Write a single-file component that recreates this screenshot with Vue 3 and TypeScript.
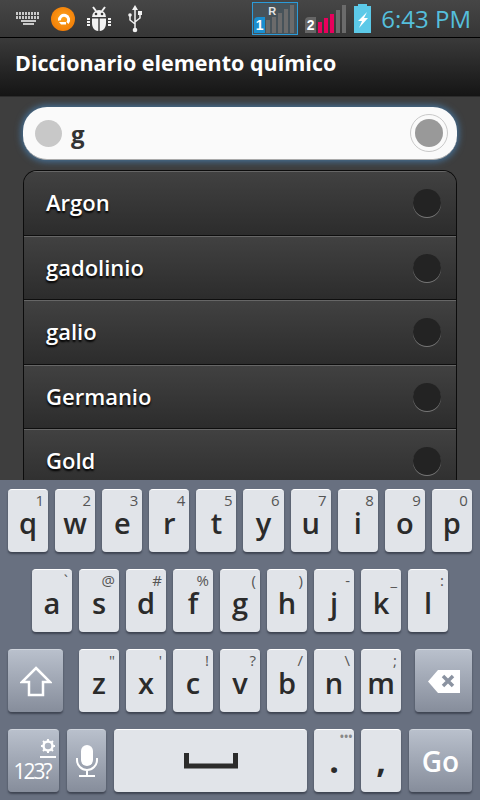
<template>
  <div class="phone">
    <div class="status">
      <div class="status-left">
        <svg class="ic-kbd" width="24" height="14" viewBox="0 0 24 14">
          <g fill="#c9c9c9">
            <rect v-for="c in kbdDots" :key="c.x + '-' + c.y" :x="c.x" :y="c.y" width="2" height="3" />
            <rect x="5" y="8" width="15" height="2" />
            <rect x="7" y="11" width="11" height="2" />
          </g>
        </svg>
        <svg class="ic-ring" width="24" height="24" viewBox="0 0 24 24">
          <defs>
            <radialGradient id="orange" cx="50%" cy="45%" r="60%">
              <stop offset="0" stop-color="#ffa41c" />
              <stop offset="1" stop-color="#f07a05" />
            </radialGradient>
          </defs>
          <circle cx="12" cy="12" r="12" fill="url(#orange)" />
          <path d="M8.5 13.5a4.6 4.600 0 1 1 8 2.500" fill="none" stroke="#fff" stroke-width="3" />
          <path d="M8 15h7v2.500h-5z" fill="#fff" />
        </svg>
        <svg class="ic-bug" width="26" height="26" viewBox="0 0 26 26">
          <g fill="#f2f2f2">
            <path d="M6 11a7 7 0 0 1 14 0z" />
            <path d="M6 12.5h6.3V25C8 25 6 21 6 17zM13.7 12.5H20V17c0 4-2 8-6.3 8z" />
            <rect x="1" y="12" width="3" height="2" />
            <rect x="1" y="15" width="3" height="2" />
            <rect x="1" y="18" width="3" height="2" />
            <rect x="22" y="12" width="3" height="2" />
            <rect x="22" y="15" width="3" height="2" />
            <rect x="22" y="18" width="3" height="2" />
          </g>
          <path d="M7 1l3 4M19 1l-3 4" stroke="#f2f2f2" stroke-width="2" />
          <circle cx="10" cy="8" r="1.3" fill="#3a3a3a" />
          <circle cx="16" cy="8" r="1.3" fill="#3a3a3a" />
        </svg>
        <svg class="ic-usb" width="16" height="28" viewBox="0 0 16 28">
          <path d="M8 4v21M8 19l-5-4v-4M8 17l5-4V9" fill="none" stroke="#f2f2f2" stroke-width="1.5" />
          <path d="M8 0l3 5H5z" fill="#f2f2f2" />
          <circle cx="8" cy="25" r="2.3" fill="#f2f2f2" />
          <circle cx="3" cy="10" r="1.8" fill="#f2f2f2" />
          <rect x="11" y="6" width="4" height="4" fill="#f2f2f2" />
        </svg>
      </div>
      <div class="status-right">
        <div class="sim sim-one">
          <span class="roam">R</span>
          <span class="sim-num num-one">1</span>
          <div class="bars">
            <i v-for="(h, n) in simOneBars" :key="n" :style="{ height: h + 'px' }"></i>
          </div>
        </div>
        <div class="sim sim-two">
          <span class="sim-num num-two">2</span>
          <div class="bars">
            <i
              v-for="(h, n) in simTwoBars"
              :key="n"
              :class="{ hot: n < 3 }"
              :style="{ height: h + 'px' }"
            ></i>
          </div>
        </div>
        <svg class="ic-batt" width="17" height="29" viewBox="0 0 17 29">
          <rect x="4" y="0" width="9" height="3" fill="#5cc9e8" />
          <rect x="0" y="2" width="17" height="27" fill="#5cc9e8" />
          <path d="M13 8L4 17h4l-3 7 9-10h-4l3-6z" fill="#fff" />
        </svg>
        <span class="clock">6:43 PM</span>
      </div>
    </div>

    <div class="titlebar">Diccionario elemento químico</div>

    <div class="content">
      <div class="search">
        <span class="search-dot"></span>
        <span class="search-text">g</span>
        <span class="clear"><span class="clear-in"></span></span>
      </div>

      <div class="list">
        <div v-for="item in elements" :key="item" class="row">
          <span class="row-name">{{ item }}</span>
          <span class="row-radio"></span>
        </div>
      </div>
    </div>

    <div class="keyboard">
      <div class="kb-row">
        <div v-for="k in rowOne" :key="k.m" class="key">
          <span class="sub">{{ k.s }}</span>
          <span class="main">{{ k.m }}</span>
        </div>
      </div>
      <div class="kb-row row-two">
        <div v-for="k in rowTwo" :key="k.m" class="key">
          <span class="sub">{{ k.s }}</span>
          <span class="main">{{ k.m }}</span>
        </div>
      </div>
      <div class="kb-row">
        <div class="key fn shift">
          <svg width="32" height="31" viewBox="0 0 32 31">
            <path d="M16 2L30 16H23V29H9V16H2z" fill="none" stroke="#fff" stroke-width="2.5" />
          </svg>
        </div>
        <div v-for="k in rowThree" :key="k.m" class="key">
          <span class="sub">{{ k.s }}</span>
          <span class="main">{{ k.m }}</span>
        </div>
        <div class="key fn del">
          <svg width="34" height="25" viewBox="0 0 34 25">
            <path d="M11 1H33V24H11L1 12.5z" fill="#fff" />
            <path d="M16 7l10 10M26 7L16 17" stroke="#8b93a1" stroke-width="3.5" />
          </svg>
        </div>
      </div>
      <div class="kb-row">
        <div class="key fn sym">
          <svg class="gear" width="16" height="20" viewBox="0 0 16 20">
            <circle cx="8" cy="7" r="4.5" fill="none" stroke="#fff" stroke-width="2.5" />
            <path d="M8 0v2.5M8 11.5V14M1 7h2.5M12.5 7H15M3 2l2 2M13 2l-2 2M3 12l2-2M13 12l-2-2" stroke="#fff" stroke-width="2" />
            <rect x="0" y="17" width="16" height="2" fill="#fff" />
          </svg>
          <span class="sym-text">123?</span>
        </div>
        <div class="key fn mic">
          <svg width="24" height="34" viewBox="0 0 24 34">
            <rect x="6" y="1" width="12" height="21" rx="6" fill="#fff" />
            <path d="M2 14v2a10 10 0 0 0 20 0v-2M12 26v5" fill="none" stroke="#fff" stroke-width="2" />
            <rect x="4" y="31" width="16" height="2" fill="#fff" />
          </svg>
        </div>
        <div class="key space">
          <svg width="54" height="16" viewBox="0 0 54 16">
            <path d="M2.5 0v13h49V0" fill="none" stroke="#2b2b2b" stroke-width="5" />
          </svg>
        </div>
        <div class="key">
          <span class="sub dots">•••</span>
          <span class="main punct">.</span>
        </div>
        <div class="key">
          <span class="main punct">,</span>
        </div>
        <div class="key fn go">Go</div>
      </div>
    </div>
  </div>
</template>

<script setup lang="ts">
interface KeyDef {
  m: string;
  s: string;
}

const toKeys = (mains: string, subs: string): KeyDef[] =>
  mains.split("").map((m, i) => ({ m, s: subs[i] }));

const rowOne = toKeys("qwertyuiop", "1234567890");
const rowTwo = toKeys("asdfghjkl", "`@#%()-_:");
const rowThree = toKeys("zxcvbnm", "\"'!?/\\;");

const elements = ["Argon", "gadolinio", "galio", "Germanio", "Gold"];

const simOneBars = [13, 16, 20, 24, 28];
const simTwoBars = [11, 15, 19, 23, 28];

// teclas pequenas del icono de teclado
const kbdDots: { x: number; y: number }[] = [];
for (let y = 0; y < 2; y++) {
  for (let x = 0; x < 8; x++) {
    kbdDots.push({ x: x * 3, y: y * 4 });
  }
}
</script>

<style scoped>
.phone {
  width: 480px;
  height: 800px;
  overflow: hidden;
  display: flex;
  flex-direction: column;
  background: #3e3e3e;
  font-family: "Open Sans", "Noto Sans", sans-serif;
}

.status {
  height: 38px;
  flex: none;
  box-sizing: border-box;
  display: flex;
  justify-content: space-between;
  align-items: center;
  background: linear-gradient(to bottom, #464646, #363636);
  border-bottom: 1px solid #000;
}
.status-left {
  display: flex;
  align-items: center;
  padding-left: 16px;
}
.ic-ring {
  margin-left: 11px;
}
.ic-bug {
  margin-left: 11px;
}
.ic-usb {
  margin-left: 15px;
}
.status-right {
  display: flex;
  align-items: center;
  padding-right: 9px;
}
.sim {
  position: relative;
  height: 33px;
  display: flex;
  align-items: flex-end;
}
.sim-one {
  width: 46px;
  margin-right: 7px;
  border: 1px solid #2b9bd9;
  background: #47535a;
  padding: 0 1px 1px 13px;
  box-sizing: border-box;
}
.sim-two {
  width: 42px;
  margin-right: 7px;
  padding: 0 0 2px 13px;
  box-sizing: border-box;
}
.roam {
  position: absolute;
  top: 3px;
  left: 15px;
  font: 700 11px/11px "Liberation Sans", sans-serif;
  color: #e4e4e4;
}
.sim-num {
  position: absolute;
  left: 1px;
  bottom: 1px;
  width: 11px;
  height: 16px;
  font: 700 14px/16px "Liberation Sans", sans-serif;
  text-align: center;
  color: #fff;
}
.num-one {
  background: #1a8fd0;
  border-radius: 4px 0 0 0;
}
.num-two {
  left: 0;
  bottom: 2px;
  background: #666;
  border-radius: 4px 0 0 0;
}
.bars {
  display: flex;
  align-items: flex-end;
  gap: 2px;
}
.bars i {
  width: 4px;
  background: #6b6b6b;
}
.bars i.hot {
  background: #e8005c;
}
.clock {
  font: 400 24px "Open Sans", sans-serif;
  color: #55bfdc;
  margin-left: 10px;
}

.titlebar {
  height: 59px;
  flex: none;
  box-sizing: border-box;
  padding: 10px 0 0 15px;
  background: linear-gradient(to bottom, #3a3a3a, #151515);
  color: #fff;
  font-size: 21.5px;
  font-weight: 700;
  line-height: 30px;
  border-bottom: 1px solid #2c2c2c;
}

.content {
  flex: 1;
  min-height: 0;
  padding: 10px 23px 0;
  overflow: hidden;
}
.search {
  height: 53px;
  box-sizing: border-box;
  display: flex;
  align-items: center;
  padding: 0 12px;
  border-radius: 24px;
  background: #fafafa;
  border-bottom: 1px solid #aaa;
  box-shadow: 0 0 6px 2px #456f94;
}
.search-dot {
  width: 27px;
  height: 27px;
  border-radius: 50%;
  background: #c8c8c8;
}
.search-text {
  margin-left: 9px;
  flex: 1;
  font: 700 24px "Open Sans", sans-serif;
  color: #333;
}
.clear {
  width: 38px;
  height: 38px;
  box-sizing: border-box;
  margin-right: -3px;
  border-radius: 50%;
  border: 1px solid #c9c9c9;
  display: flex;
  align-items: center;
  justify-content: center;
}
.clear-in {
  width: 28px;
  height: 28px;
  border-radius: 50%;
  background: #999;
}

.list {
  margin-top: 10px;
  border: 1px solid #0c0c0c;
  border-bottom: 0;
  border-radius: 14px 14px 0 0;
  overflow: hidden;
}
.row {
  height: 64.5px;
  box-sizing: border-box;
  display: flex;
  align-items: center;
  justify-content: space-between;
  padding: 0 15px 0 22px;
  background: linear-gradient(to bottom, #414141, #2c2c2c);
  border-top: 1px solid #666;
  border-bottom: 1px solid #0e0e0e;
}
.row-name {
  color: #fff;
  font-size: 22px;
  font-weight: 600;
  margin-top: -2px;
  text-shadow: 0 2px 2px #000;
}
.row-radio {
  width: 28px;
  height: 28px;
  border-radius: 50%;
  background: #232323;
  box-shadow: 0 1px 0 #777;
}

.keyboard {
  height: 320px;
  flex: none;
  box-sizing: border-box;
  padding: 9px 8px 0;
  background: #687080;
  display: flex;
  flex-direction: column;
  gap: 17px;
}
.kb-row {
  display: flex;
  gap: 7px;
  height: 63px;
}
.row-two {
  padding: 0 24px;
}
.key {
  position: relative;
  flex: 1;
  display: flex;
  align-items: center;
  justify-content: center;
  border-radius: 4px;
  background: #e1e4e9;
  border-top: 1px solid #fff;
  box-shadow: 0 2px 2px #3f4552;
  box-sizing: border-box;
  color: #2b2b2b;
}
.main {
  font-size: 29px;
  font-weight: 600;
  line-height: 1;
  margin-top: 2px;
}
.punct {
  font-size: 34px;
  font-weight: 700;
  margin-top: -2px;
}
.sub {
  position: absolute;
  top: 4px;
  right: 4px;
  font-size: 15px;
  line-height: 13px;
  color: #555;
}
.dots {
  top: 0;
  right: 2px;
  font-size: 14px;
  letter-spacing: -1px;
  color: #888;
}
.fn {
  background: linear-gradient(to bottom, #b9c0cc, #868d9b);
  border-top: 1px solid #cfd4dc;
  color: #fff;
}
.shift {
  flex: 0 0 55px;
  margin-right: 9px;
}
.del {
  flex: 0 0 57px;
  margin-left: 7px;
}
.sym {
  flex: 0 0 51px;
  flex-direction: column;
  align-items: flex-end;
  padding-right: 3px;
}
.sym-text {
  font-size: 21px;
  line-height: 24px;
  align-self: center;
  letter-spacing: -2px;
}
.mic {
  flex: 0 0 39px;
  margin-left: 1px;
}
.space {
  flex: 0 0 193px;
  margin-left: 1px;
}
.go {
  flex: 0 0 63px;
  margin-left: 1px;
  font-size: 28px;
  font-weight: 600;
}
</style>
